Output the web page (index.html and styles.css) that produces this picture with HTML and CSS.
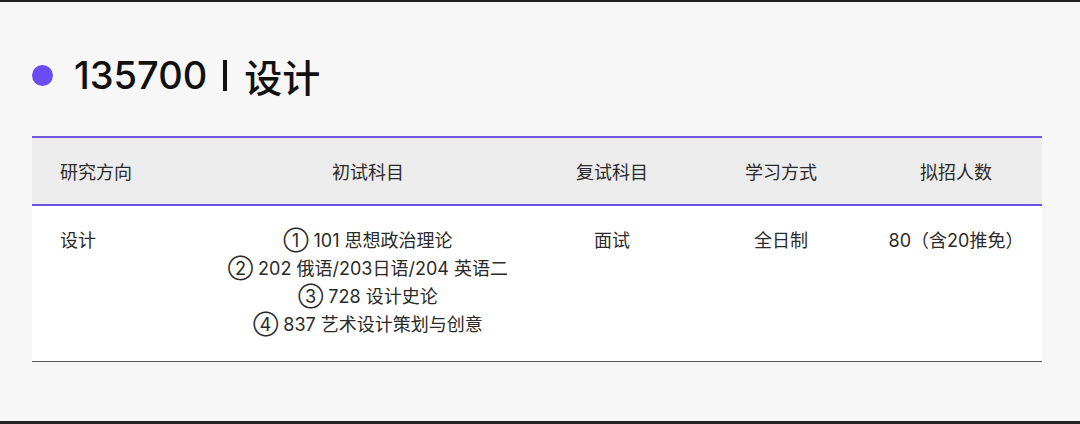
FILE: index.html
```html
<!DOCTYPE html>
<html lang="zh">
<head>
<meta charset="utf-8">
<link rel="stylesheet" href="styles.css">
</head>
<body>
<div class="page">
  <h1 class="title"><span class="dot"></span><span class="title-text">135700<span class="sep"></span>设计</span></h1>
  <div class="table">
    <div class="row head">
      <div class="cell left">研究方向</div>
      <div class="cell">初试科目</div>
      <div class="cell">复试科目</div>
      <div class="cell">学习方式</div>
      <div class="cell">拟招人数</div>
    </div>
    <div class="row body">
      <div class="cell left">设计</div>
      <div class="cell">① 101 思想政治理论<br>② 202 俄语/203日语/204 英语二<br>③ 728 设计史论<br>④ 837 艺术设计策划与创意</div>
      <div class="cell">面试</div>
      <div class="cell">全日制</div>
      <div class="cell">80（含20推免）</div>
    </div>
  </div>
</div>
</body>
</html>
```
FILE: styles.css
```css
html, body {
  margin: 0;
  padding: 0;
}
body {
  width: 1080px;
  height: 424px;
  background: #f7f7f7;
  font-family: Inter, "Noto Sans CJK SC", sans-serif;
  color: #2a2a2a;
  overflow: hidden;
}
.page {
  height: 419px;
  border-top: 2px solid #222;
  border-bottom: 3px solid #222;
  padding: 0 38px 0 32px;
}
.title {
  margin: 0;
  height: 134px;
  display: flex;
  align-items: center;
  gap: 21px;
  font-size: 38px;
  font-weight: 500;
  color: #111;
  box-sizing: border-box;
  padding-top: 12px;
}
.dot {
  width: 21px;
  height: 21px;
  border-radius: 50%;
  background: #6a4cf5;
  flex: none;
}
.title-text {
  display: flex;
  align-items: center;
}
.sep {
  display: inline-block;
  width: 4px;
  height: 31px;
  background: #111;
  margin: 0 17px 0 16px;
}
.table {
  width: 1010px;
}
.row {
  display: grid;
  grid-template-columns: 172px 328px 160px 178px 172px;
  font-size: 18px;
}
.head {
  background: #ececec;
  border-top: 2px solid #7259e0;
  border-bottom: 2px solid #6b52de;
  height: 66px;
  align-items: center;
}
.body {
  background: #fff;
  border-bottom: 1px solid #555;
  padding: 21px 0 22px;
  line-height: 28px;
  align-items: start;
}
.cell {
  text-align: center;
}
.cell.left {
  text-align: left;
  padding-left: 28px;
}
```
